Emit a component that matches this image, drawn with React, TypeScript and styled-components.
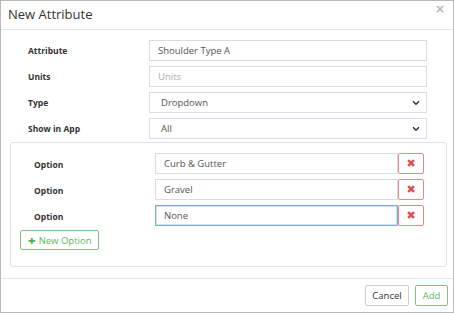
import React, { useState } from 'react';
import styled, { createGlobalStyle } from 'styled-components';

const GlobalStyle = createGlobalStyle`
  * { box-sizing: border-box; }
  body {
    margin: 0;
    background: #ffffff;
    font-family: "Open Sans", "Noto Sans", sans-serif;
    color: #333333;
  }
`;

const Modal = styled.div`
  width: 454px;
  height: 313px;
  border: 1px solid #b9b9b9;
  background: #fff;
  display: flex;
  flex-direction: column;
`;

const Header = styled.div`
  position: relative;
  height: 29px;
  padding: 4px 0 0 7px;
  border-bottom: 1px solid #e3e3e3;
`;

const Title = styled.h4`
  margin: 0;
  font-size: 13px;
  font-weight: 400;
  color: #333;
  line-height: 18px;
`;

const Close = styled.button`
  position: absolute;
  top: 1px;
  right: 8px;
  border: 0;
  background: none;
  padding: 0;
  font-size: 12px;
  font-weight: 700;
  line-height: 14px;
  color: #b5b5b5;
  font-family: "DejaVu Sans", sans-serif;
`;

const Body = styled.div`
  flex: 1;
  padding: 10px 8px 0 8px;
  border-bottom: 1px solid #e5e5e5;
`;

const Form = styled.div`
  display: flex;
  flex-direction: column;
  gap: 5px;
  padding-left: 19px;
`;

const Row = styled.div`
  display: grid;
  grid-template-columns: 121px 278px;
  align-items: center;
  height: 21px;
`;

const Label = styled.label`
  font-size: 8.5px;
  font-weight: 700;
  color: #333;
`;

const Input = styled.input<{ $focused?: boolean }>`
  width: 100%;
  height: 21px;
  border: 1px solid ${p => (p.$focused ? '#7ea9d8' : '#d9dde3')};
  border-radius: 0;
  padding: 0 8px;
  font-family: "Open Sans", sans-serif;
  font-size: 9.5px;
  color: #555;
  outline: none;
  box-shadow: ${p => (p.$focused ? 'inset 0 0 0 1px rgba(126,169,216,0.35)' : 'none')};
  &::placeholder { color: #aaa; }
`;

const SelectBox = styled.div`
  position: relative;
  height: 21px;
  border: 1px solid #d9dde3;
  padding: 0 11px;
  display: flex;
  align-items: center;
  font-size: 9.5px;
  color: #555;
`;

const Chevron = styled.svg`
  position: absolute;
  right: 6px;
  top: 7px;
`;

const OptionPanel = styled.div`
  margin-top: 3px;
  border: 1px solid #dfe2e6;
  border-radius: 3px;
  padding: 10px 0 16px 23px;
  width: 437px;
  margin-left: 1px;
  display: flex;
  flex-direction: column;
  gap: 5px;
`;

const OptionRow = styled.div`
  display: grid;
  grid-template-columns: 121px 243px 26px;
  align-items: center;
  height: 21px;
`;

const OptionLabel = styled(Label)`
  padding-top: 1px;
`;

const RemoveButton = styled.button`
  height: 21px;
  width: 26px;
  border: 1px solid #e48a8a;
  border-radius: 2px;
  background: #fff;
  padding: 0;
  display: flex;
  align-items: center;
  justify-content: center;
  color: #d9534f;
  font-size: 11px;
  font-weight: 700;
  font-family: "DejaVu Sans", sans-serif;
`;

const AddOptionButton = styled.button`
  align-self: flex-start;
  margin-left: -14px;
  margin-top: -1px;
  height: 20px;
  width: 79px;
  padding: 0 0 0 7px;
  border: 1px solid #7cc47c;
  border-radius: 2px;
  background: #fff;
  color: #5cb85c;
  font-family: "Open Sans", sans-serif;
  font-size: 9.5px;
  display: flex;
  align-items: center;
  gap: 3px;
`;

const Plus = styled.span`
  font-weight: 800;
  font-size: 13px;
  line-height: 10px;
  color: #4cae4c;
`;

const Footer = styled.div`
  height: 33px;
  display: flex;
  justify-content: flex-end;
  align-items: flex-start;
  gap: 6px;
  padding: 6px 5px 0 0;
`;

const FooterButton = styled.button<{ $primary?: boolean }>`
  height: 21px;
  width: ${p => (p.$primary ? '33px' : '44px')};
  padding: 0;
  border: 1px solid ${p => (p.$primary ? '#7cc47c' : '#cccccc')};
  border-radius: 2px;
  background: #fff;
  color: ${p => (p.$primary ? '#5cb85c' : '#333')};
  font-family: "Open Sans", sans-serif;
  font-size: 9.5px;
`;

const ChevronIcon = () => (
  <Chevron width="8" height="6" viewBox="0 0 8 6">
    <path d="M1 1.2 L4 4.2 L7 1.2" fill="none" stroke="#333" strokeWidth="1.5" />
  </Chevron>
);

const options = ['Curb & Gutter', 'Gravel', 'None'];

const App = () => {
  const [values, setValues] = useState(options);

  return (
    <>
      <GlobalStyle />
      <Modal>
        <Header>
          <Title>New Attribute</Title>
          <Close>×</Close>
        </Header>
        <Body>
          <Form>
            <Row>
              <Label>Attribute</Label>
              <Input defaultValue="Shoulder Type A" />
            </Row>
            <Row>
              <Label>Units</Label>
              <Input placeholder="Units" />
            </Row>
            <Row>
              <Label>Type</Label>
              <SelectBox>
                Dropdown
                <ChevronIcon />
              </SelectBox>
            </Row>
            <Row>
              <Label>Show in App</Label>
              <SelectBox>
                All
                <ChevronIcon />
              </SelectBox>
            </Row>
          </Form>
          <OptionPanel>
            {values.map((v, i) => (
              <OptionRow key={i}>
                <OptionLabel>Option</OptionLabel>
                <Input
                  $focused={i === values.length - 1}
                  value={v}
                  onChange={e => setValues(values.map((x, j) => (j === i ? e.target.value : x)))}
                />
                <RemoveButton>✖</RemoveButton>
              </OptionRow>
            ))}
            <AddOptionButton>
              <Plus>+</Plus>
              New Option
            </AddOptionButton>
          </OptionPanel>
        </Body>
        <Footer>
          <FooterButton>Cancel</FooterButton>
          <FooterButton $primary>Add</FooterButton>
        </Footer>
      </Modal>
    </>
  );
};

export default App;
